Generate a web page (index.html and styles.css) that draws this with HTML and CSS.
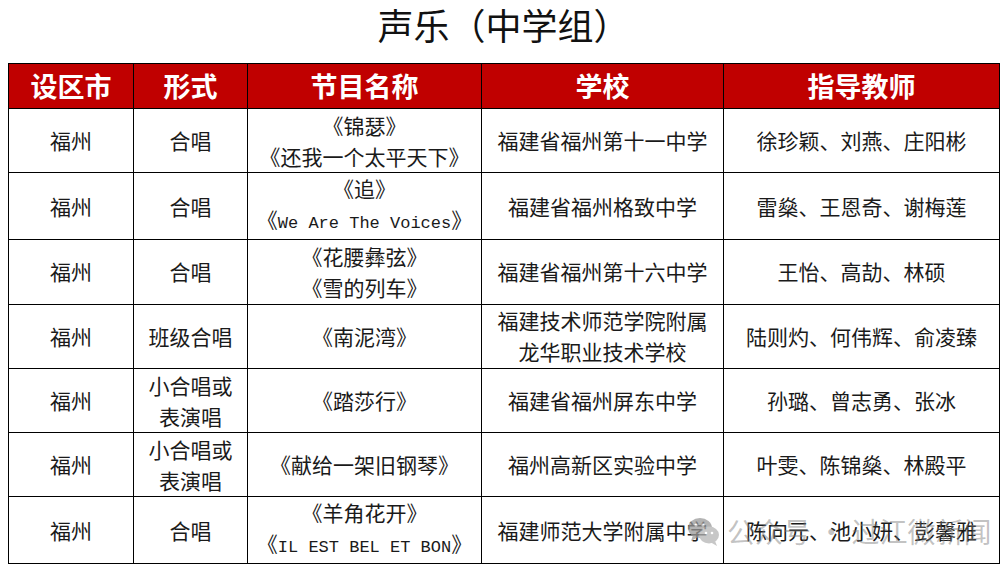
FILE: index.html
```html
<!DOCTYPE html>
<html lang="zh-CN">
<head>
<meta charset="utf-8">
<title>声乐（中学组）</title>
<link rel="stylesheet" href="styles.css">
</head>
<body>
<div class="page">
  <h1 class="title">声乐（中学组）</h1>
  <table class="list">
    <colgroup>
      <col class="c1"><col class="c2"><col class="c3"><col class="c4"><col class="c5">
    </colgroup>
    <thead>
      <tr><th>设区市</th><th>形式</th><th>节目名称</th><th>学校</th><th>指导教师</th></tr>
    </thead>
    <tbody>
      <tr><td>福州</td><td>合唱</td><td>《锦瑟》<br>《还我一个太平天下》</td><td>福建省福州第十一中学</td><td>徐珍颖、刘燕、庄阳彬</td></tr>
      <tr><td>福州</td><td>合唱</td><td>《追》<br>《<span class="lat">We Are The Voices</span>》</td><td>福建省福州格致中学</td><td>雷燊、王恩奇、谢梅莲</td></tr>
      <tr><td>福州</td><td>合唱</td><td>《花腰彝弦》<br>《雪的列车》</td><td>福建省福州第十六中学</td><td>王怡、高劼、林硕</td></tr>
      <tr><td>福州</td><td>班级合唱</td><td>《南泥湾》</td><td>福建技术师范学院附属<br>龙华职业技术学校</td><td>陆则灼、何伟辉、俞凌臻</td></tr>
      <tr><td>福州</td><td>小合唱或<br>表演唱</td><td>《踏莎行》</td><td>福建省福州屏东中学</td><td>孙璐、曾志勇、张冰</td></tr>
      <tr><td>福州</td><td>小合唱或<br>表演唱</td><td>《献给一架旧钢琴》</td><td>福州高新区实验中学</td><td>叶雯、陈锦燊、林殿平</td></tr>
      <tr><td>福州</td><td>合唱</td><td>《羊角花开》<br>《<span class="lat">IL EST BEL ET BON</span>》</td><td>福建师范大学附属中学</td><td>陈向元、池小妍、彭馨雅</td></tr>
    </tbody>
  </table>
  <div class="mark">
    <svg class="mark-icon" width="34" height="34" viewBox="0 0 34 34" aria-hidden="true">
      <ellipse cx="13" cy="14" rx="12" ry="10" fill="#9a9a9a"/>
      <path d="M6 21 L4 27 L11 23 Z" fill="#9a9a9a"/>
      <ellipse cx="22" cy="21" rx="10" ry="8.5" fill="#b5b5b5"/>
      <path d="M28 27 L30 32 L24 28.5 Z" fill="#b5b5b5"/>
      <circle cx="9" cy="11" r="1.6" fill="#fff"/>
      <circle cx="16" cy="11" r="1.6" fill="#fff"/>
      <circle cx="19" cy="19" r="1.3" fill="#fff"/>
      <circle cx="25" cy="19" r="1.3" fill="#fff"/>
    </svg>
    <span class="mark-text">公众号 · 过江微新闻</span>
  </div>
</div>
</body>
</html>
```

FILE: styles.css
```css
html, body {
  margin: 0;
  padding: 0;
  background: #ffffff;
}
body {
  padding: 0 8px;
  font-family: "Noto Sans CJK SC", "Noto Sans", sans-serif;
  color: #111;
}
.page {
  position: relative;
  width: 991px;
}
.title {
  margin: 0 0 17px 0;
  padding-top: 2px;
  height: 44px;
  line-height: 44px;
  font-size: 36px;
  font-weight: 400;
  text-align: center;
  color: #111;
}
.list {
  width: 991px;
  table-layout: fixed;
  border-collapse: collapse;
}
.c1 { width: 125px; }
.c2 { width: 114px; }
.c3 { width: 234px; }
.c4 { width: 242px; }
.c5 { width: 276px; }
.list th, .list td {
  border: 1.5px solid #000;
  padding: 0;
  text-align: center;
  vertical-align: middle;
  white-space: nowrap;
}
.list th {
  height: 44px;
  background: #c00000;
  color: #ffffff;
  font-size: 27px;
  font-weight: 700;
  line-height: 32px;
}
.list td {
  height: 63.3px;
  font-size: 21px;
  font-weight: 400;
  line-height: 31px;
  color: #1a1a1a;
}
.lat {
  font-family: "Liberation Mono", monospace;
  font-size: 17px;
}
.mark {
  position: absolute;
  left: 679px;
  top: 514px;
  display: flex;
  align-items: center;
  gap: 6px;
  pointer-events: none;
  white-space: nowrap;
}
.mark-icon {
  opacity: 0.75;
}
.mark-text {
  font-size: 28px;
  line-height: 34px;
  color: rgba(120, 120, 120, 0.45);
}
```
